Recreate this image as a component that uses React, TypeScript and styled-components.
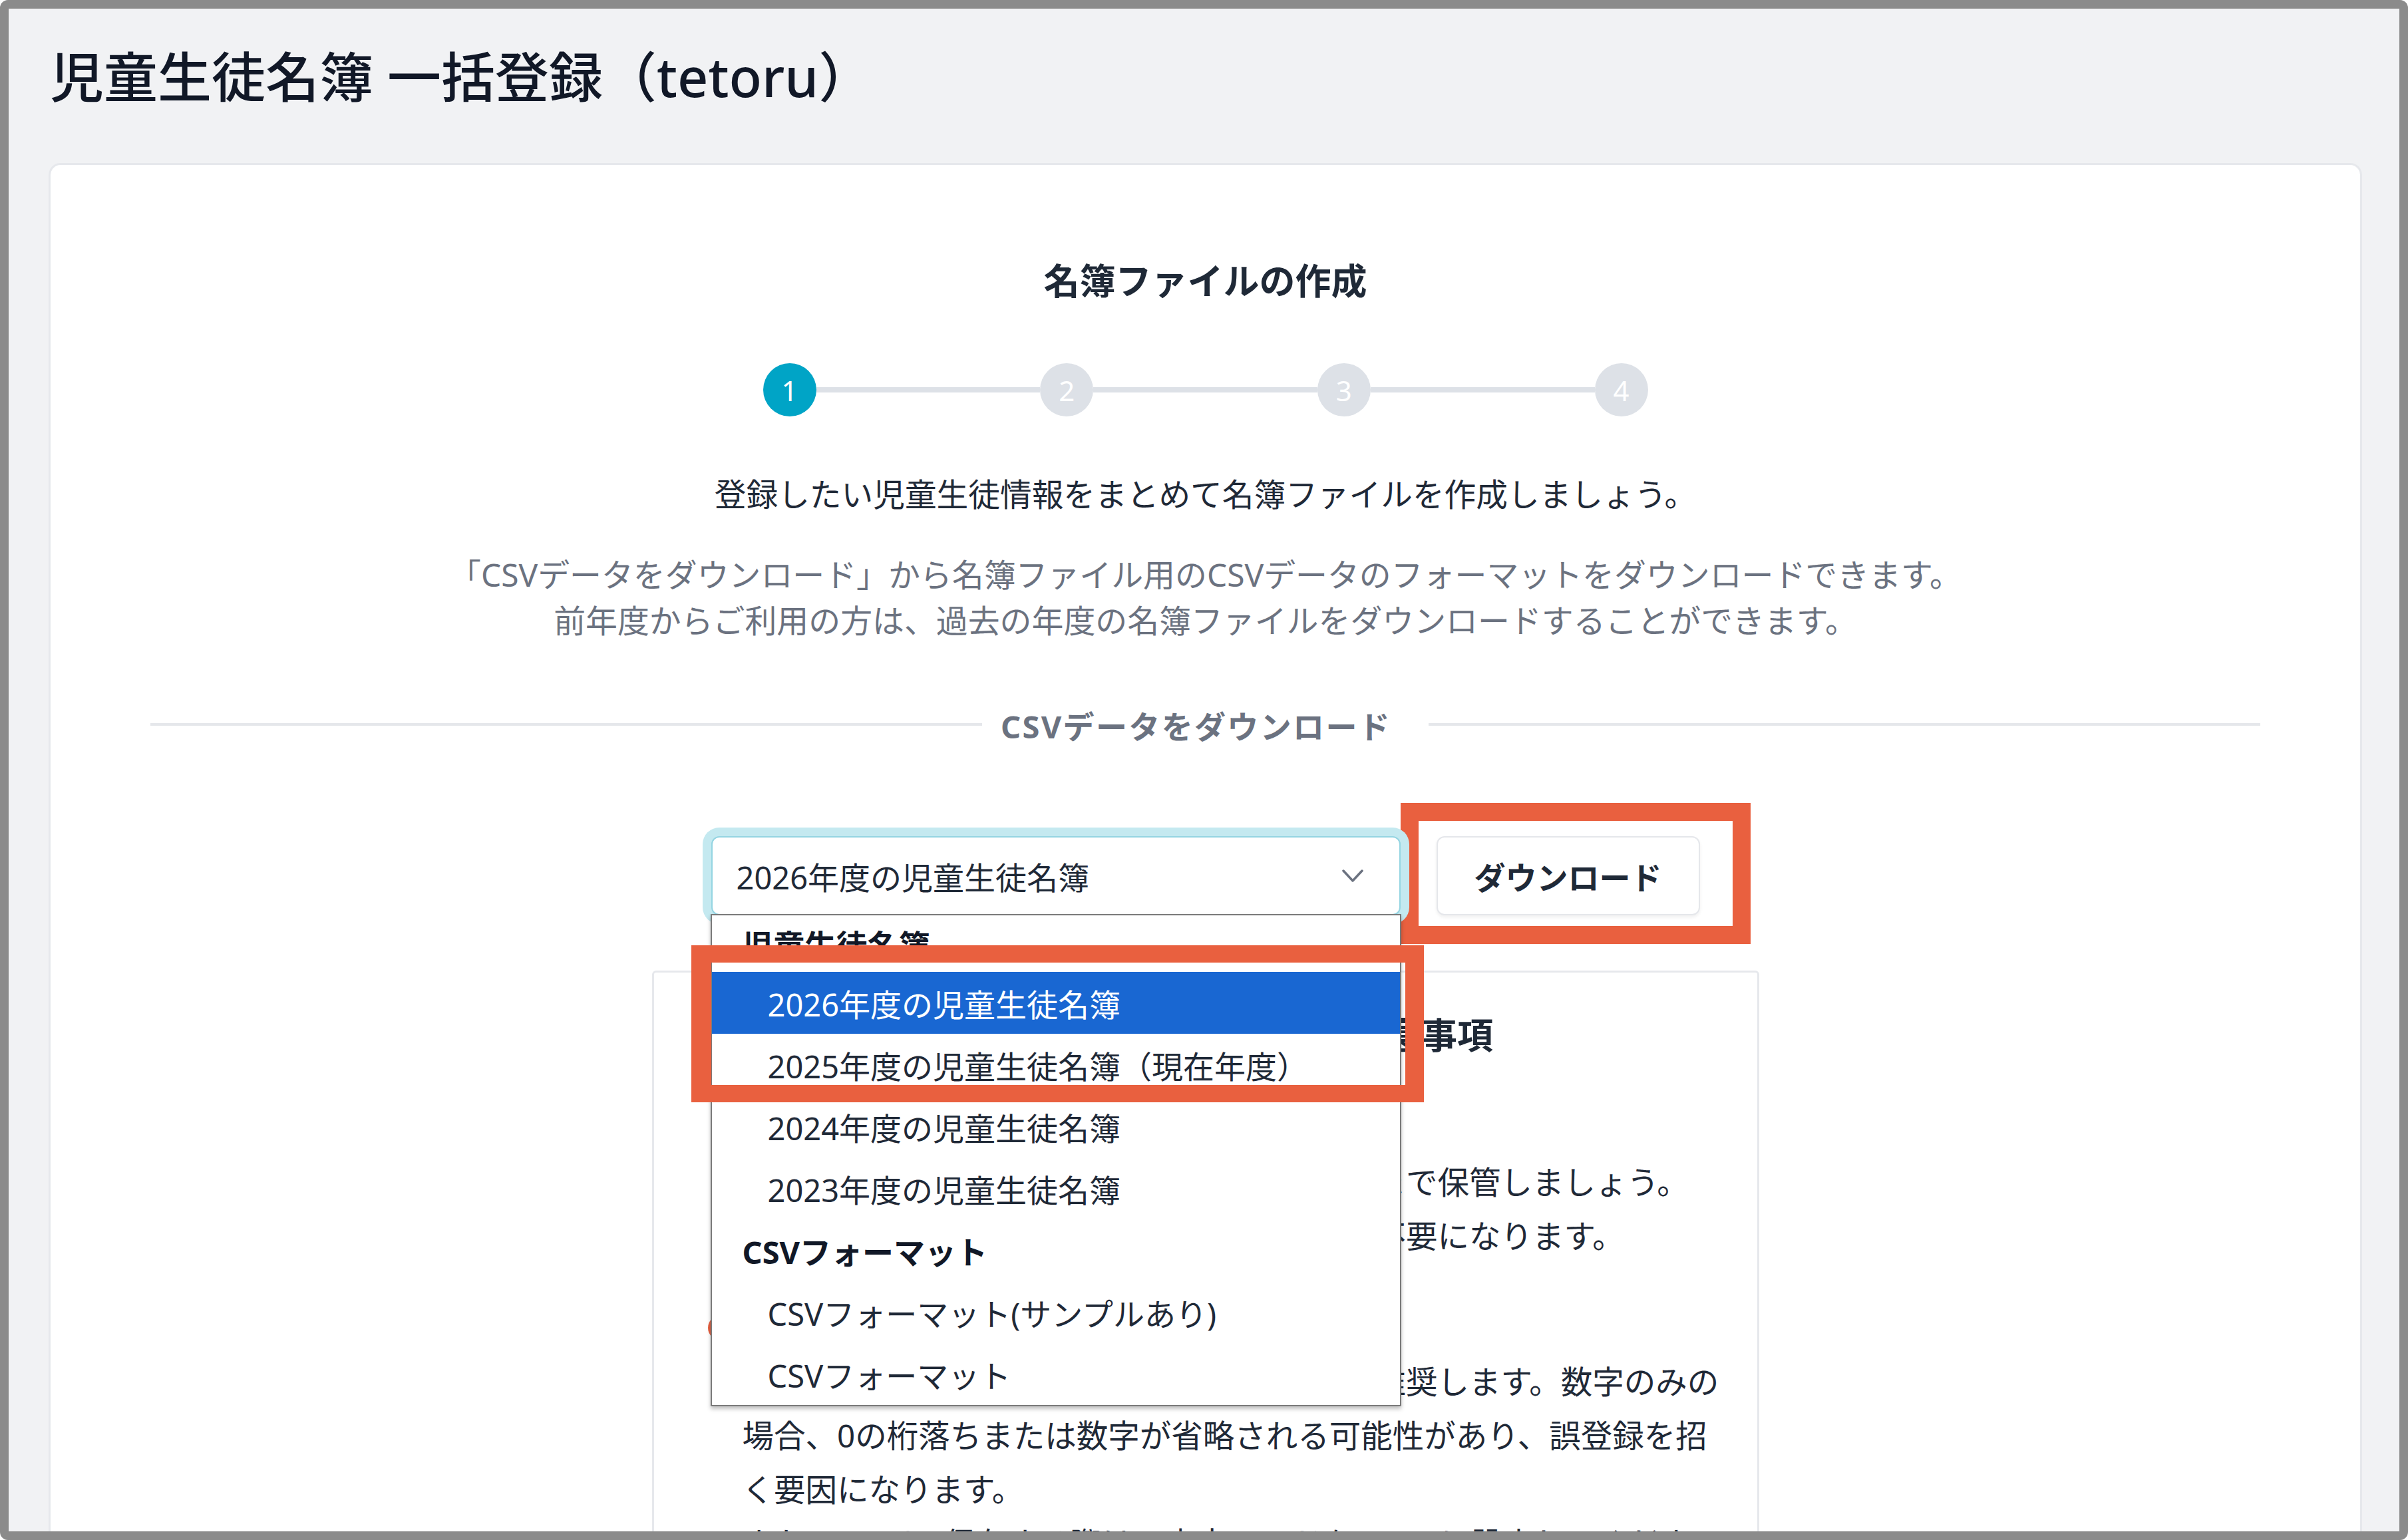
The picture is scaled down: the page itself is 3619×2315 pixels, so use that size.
import React from 'react';
import styled, { createGlobalStyle } from 'styled-components';

const GlobalStyle = createGlobalStyle`
  html, body {
    margin: 0;
    padding: 0;
  }
  body {
    font-family: "Noto Sans", "Noto Sans CJK JP", sans-serif;
    color: #1f2937;
  }
  * {
    box-sizing: border-box;
  }
`;

const Frame = styled.div`
  width: 3619px;
  height: 2315px;
  border: 13px solid #8b8b8b;
  border-radius: 12px;
  background: #f1f2f4;
  overflow: hidden;
  padding: 0 56px 0 60px;
`;

const PageTitle = styled.h1`
  margin: 54px 0 0;
  padding-left: 2px;
  font-size: 81px;
  line-height: 96px;
  font-weight: 500;
  color: #111827;
`;

const Card = styled.section`
  margin-top: 82px;
  height: 2300px;
  background: #fff;
  border: 3px solid #e6e8ec;
  border-radius: 18px;
  padding: 136px 150px 0;
`;

const SectionHeading = styled.h2`
  margin: 0;
  text-align: center;
  font-size: 54px;
  line-height: 76px;
  font-weight: 700;
  color: #1f2937;
`;

const Stepper = styled.div`
  width: 1330px;
  margin: 86px auto 0;
  display: flex;
  align-items: center;
`;

const StepDot = styled.div<{ $active?: boolean }>`
  flex: none;
  width: 80px;
  height: 80px;
  border-radius: 50%;
  background: ${(p) => (p.$active ? '#00a4c6' : '#dde1e7')};
  color: #fff;
  font-size: 42px;
  display: flex;
  align-items: center;
  justify-content: center;
`;

const StepLine = styled.div`
  flex: 1;
  height: 8px;
  background: #dde1e7;
`;

const Lead = styled.p`
  margin: 82px 0 0;
  text-align: center;
  font-size: 47.7px;
  line-height: 70px;
  color: #1f2937;
`;

const Hint = styled.p`
  margin: 51px 0 0;
  text-align: center;
  font-size: 47.9px;
  line-height: 69px;
  color: #6b7280;
`;

const Divider = styled.div`
  margin-top: 87px;
  height: 70px;
  display: flex;
  align-items: center;
`;

const DividerLine = styled.div`
  flex: 1;
  height: 4px;
  background: #e5e7eb;
`;

const DividerLabel = styled.span`
  padding: 0 56px 0 28px;
  font-size: 47px;
  font-weight: 700;
  letter-spacing: 0.05em;
  color: #6b7280;
`;

const DownloadRow = styled.div`
  margin-top: 133px;
  display: flex;
  justify-content: center;
  gap: 54px;
`;

const SelectWrap = styled.div`
  position: relative;
  z-index: 2;
  width: 1036px;
  height: 119px;
`;

const SelectBox = styled.div`
  height: 100%;
  display: flex;
  align-items: center;
  justify-content: space-between;
  padding: 0 53px 0 36px;
  background: #fff;
  border: 2px solid #95d5e2;
  border-radius: 12px;
  box-shadow: 0 0 0 13px #c4e9f0;
  font-size: 47px;
  color: #1f2937;
`;

const Dropdown = styled.div`
  position: absolute;
  top: calc(100% - 2px);
  left: -1px;
  right: -1px;
  background: #fff;
  border: 2px solid #7a7a7a;
  box-shadow: 0 4px 6px rgba(0, 0, 0, 0.25);
`;

const GroupLabel = styled.div<{ $first?: boolean }>`
  height: ${(p) => (p.$first ? '85px' : '93px')};
  display: flex;
  align-items: center;
  padding-left: 46px;
  font-size: 47px;
  font-weight: 700;
  color: #111827;
`;

const OptionRow = styled.div<{ $selected?: boolean }>`
  height: 93px;
  display: flex;
  align-items: center;
  padding-left: 84px;
  font-size: 47px;
  background: ${(p) => (p.$selected ? '#1967d2' : 'transparent')};
  color: ${(p) => (p.$selected ? '#fff' : '#1f2937')};
`;

const Highlight = styled.div`
  position: absolute;
  border: 27px solid #e9603f;
  pointer-events: none;
`;

const OptionsMark = styled(Highlight)`
  top: 45px;
  left: -31px;
  right: -36px;
  height: 236px;
  border-width: 26px 28px 26px 30px;
`;

const ButtonWrap = styled.div`
  position: relative;
`;

const ButtonMark = styled(Highlight)`
  top: -50px;
  right: -76px;
  bottom: -43px;
  left: -54px;
`;

const DownloadButton = styled.button`
  width: 396px;
  height: 119px;
  background: #fff;
  border: 2px solid #e5e7eb;
  border-radius: 12px;
  box-shadow: 0 3px 5px rgba(0, 0, 0, 0.06);
  font-family: inherit;
  font-size: 47px;
  font-weight: 600;
  color: #1f2937;
`;

const NotesCard = styled.div`
  width: 1664px;
  margin: 83px auto 0;
  height: 1200px;
  border: 3px solid #e6e8ec;
  border-radius: 6px;
  padding: 56px 50px 0 51px;
`;

const NotesHeading = styled.h3`
  margin: 0;
  text-align: center;
  font-size: 54px;
  line-height: 76px;
  font-weight: 700;
  color: #1f2937;
`;

const NoteSub = styled.div<{ $gap: number; $warn?: boolean }>`
  margin-top: ${(p) => p.$gap}px;
  display: flex;
  align-items: center;
  gap: 13px;
  padding-left: ${(p) => (p.$warn ? 29 : 82)}px;
  height: 81px;
  font-size: 47px;
  font-weight: 700;
  color: ${(p) => (p.$warn ? '#dc4c2c' : '#1f2937')};
`;

const NoteText = styled.p`
  margin: 0 0 0 82px;
  font-size: 47.5px;
  line-height: 81px;
  color: #1f2937;
`;

const Chevron = () => (
  <svg width="34" height="24" viewBox="0 0 34 24" fill="none">
    <path d="M3 4 L17 19 L31 4" stroke="#6b7280" strokeWidth="3.5" strokeLinecap="round" strokeLinejoin="round" />
  </svg>
);

const WarnIcon = () => (
  <svg width="40" height="40" viewBox="0 0 40 40">
    <circle cx="20" cy="20" r="19" fill="#e9603f" />
    <rect x="17.5" y="8" width="5" height="16" rx="2" fill="#fff" />
    <circle cx="20" cy="30" r="3" fill="#fff" />
  </svg>
);

const rosterOptions = [
  '2026年度の児童生徒名簿',
  '2025年度の児童生徒名簿（現在年度）',
  '2024年度の児童生徒名簿',
  '2023年度の児童生徒名簿',
];

const formatOptions = ['CSVフォーマット(サンプルあり)', 'CSVフォーマット'];

const App = () => {
  return (
    <>
      <GlobalStyle />
      <Frame>
        <PageTitle>児童生徒名簿 一括登録（tetoru）</PageTitle>
        <Card>
          <SectionHeading>名簿ファイルの作成</SectionHeading>
          <Stepper>
            <StepDot $active>1</StepDot>
            <StepLine />
            <StepDot>2</StepDot>
            <StepLine />
            <StepDot>3</StepDot>
            <StepLine />
            <StepDot>4</StepDot>
          </Stepper>
          <Lead>登録したい児童生徒情報をまとめて名簿ファイルを作成しましょう。</Lead>
          <Hint>
            「CSVデータをダウンロード」から名簿ファイル用のCSVデータのフォーマットをダウンロードできます。
            <br />
            前年度からご利用の方は、過去の年度の名簿ファイルをダウンロードすることができます。
          </Hint>
          <Divider>
            <DividerLine />
            <DividerLabel>CSVデータをダウンロード</DividerLabel>
            <DividerLine />
          </Divider>
          <DownloadRow>
            <SelectWrap>
              <SelectBox>
                <span>2026年度の児童生徒名簿</span>
                <Chevron />
              </SelectBox>
              <Dropdown>
                <GroupLabel $first>児童生徒名簿</GroupLabel>
                {rosterOptions.map((label, i) => (
                  <OptionRow key={label} $selected={i === 0}>
                    {label}
                  </OptionRow>
                ))}
                <GroupLabel>CSVフォーマット</GroupLabel>
                {formatOptions.map((label) => (
                  <OptionRow key={label}>{label}</OptionRow>
                ))}
                <OptionsMark />
              </Dropdown>
            </SelectWrap>
            <ButtonWrap>
              <DownloadButton>ダウンロード</DownloadButton>
              <ButtonMark />
            </ButtonWrap>
          </DownloadRow>
          <NotesCard>
            <NotesHeading>名簿ファイル作成における注意事項</NotesHeading>
            <NoteSub $gap={61}>名簿ファイルの保管</NoteSub>
            <NoteText>作成した名簿ファイルは、登録作業の完了時まで保管しましょう。</NoteText>
            <NoteText>一度登録すれば、翌年度以降の名簿再登録は不要になります。</NoteText>
            <NoteSub $gap={57} $warn>
              <WarnIcon />
              CSV編集時のご注意
            </NoteSub>
            <NoteText>
              出席番号などの列は、文字列形式での保存を推奨します。数字のみの場合、0の桁落ちまたは数字が省略される可能性があり、誤登録を招く要因になります。
            </NoteText>
            <NoteText>また、Excelで保存する際は、文字コードをUTF-8に設定してください。</NoteText>
          </NotesCard>
        </Card>
      </Frame>
    </>
  );
};

export default App;
